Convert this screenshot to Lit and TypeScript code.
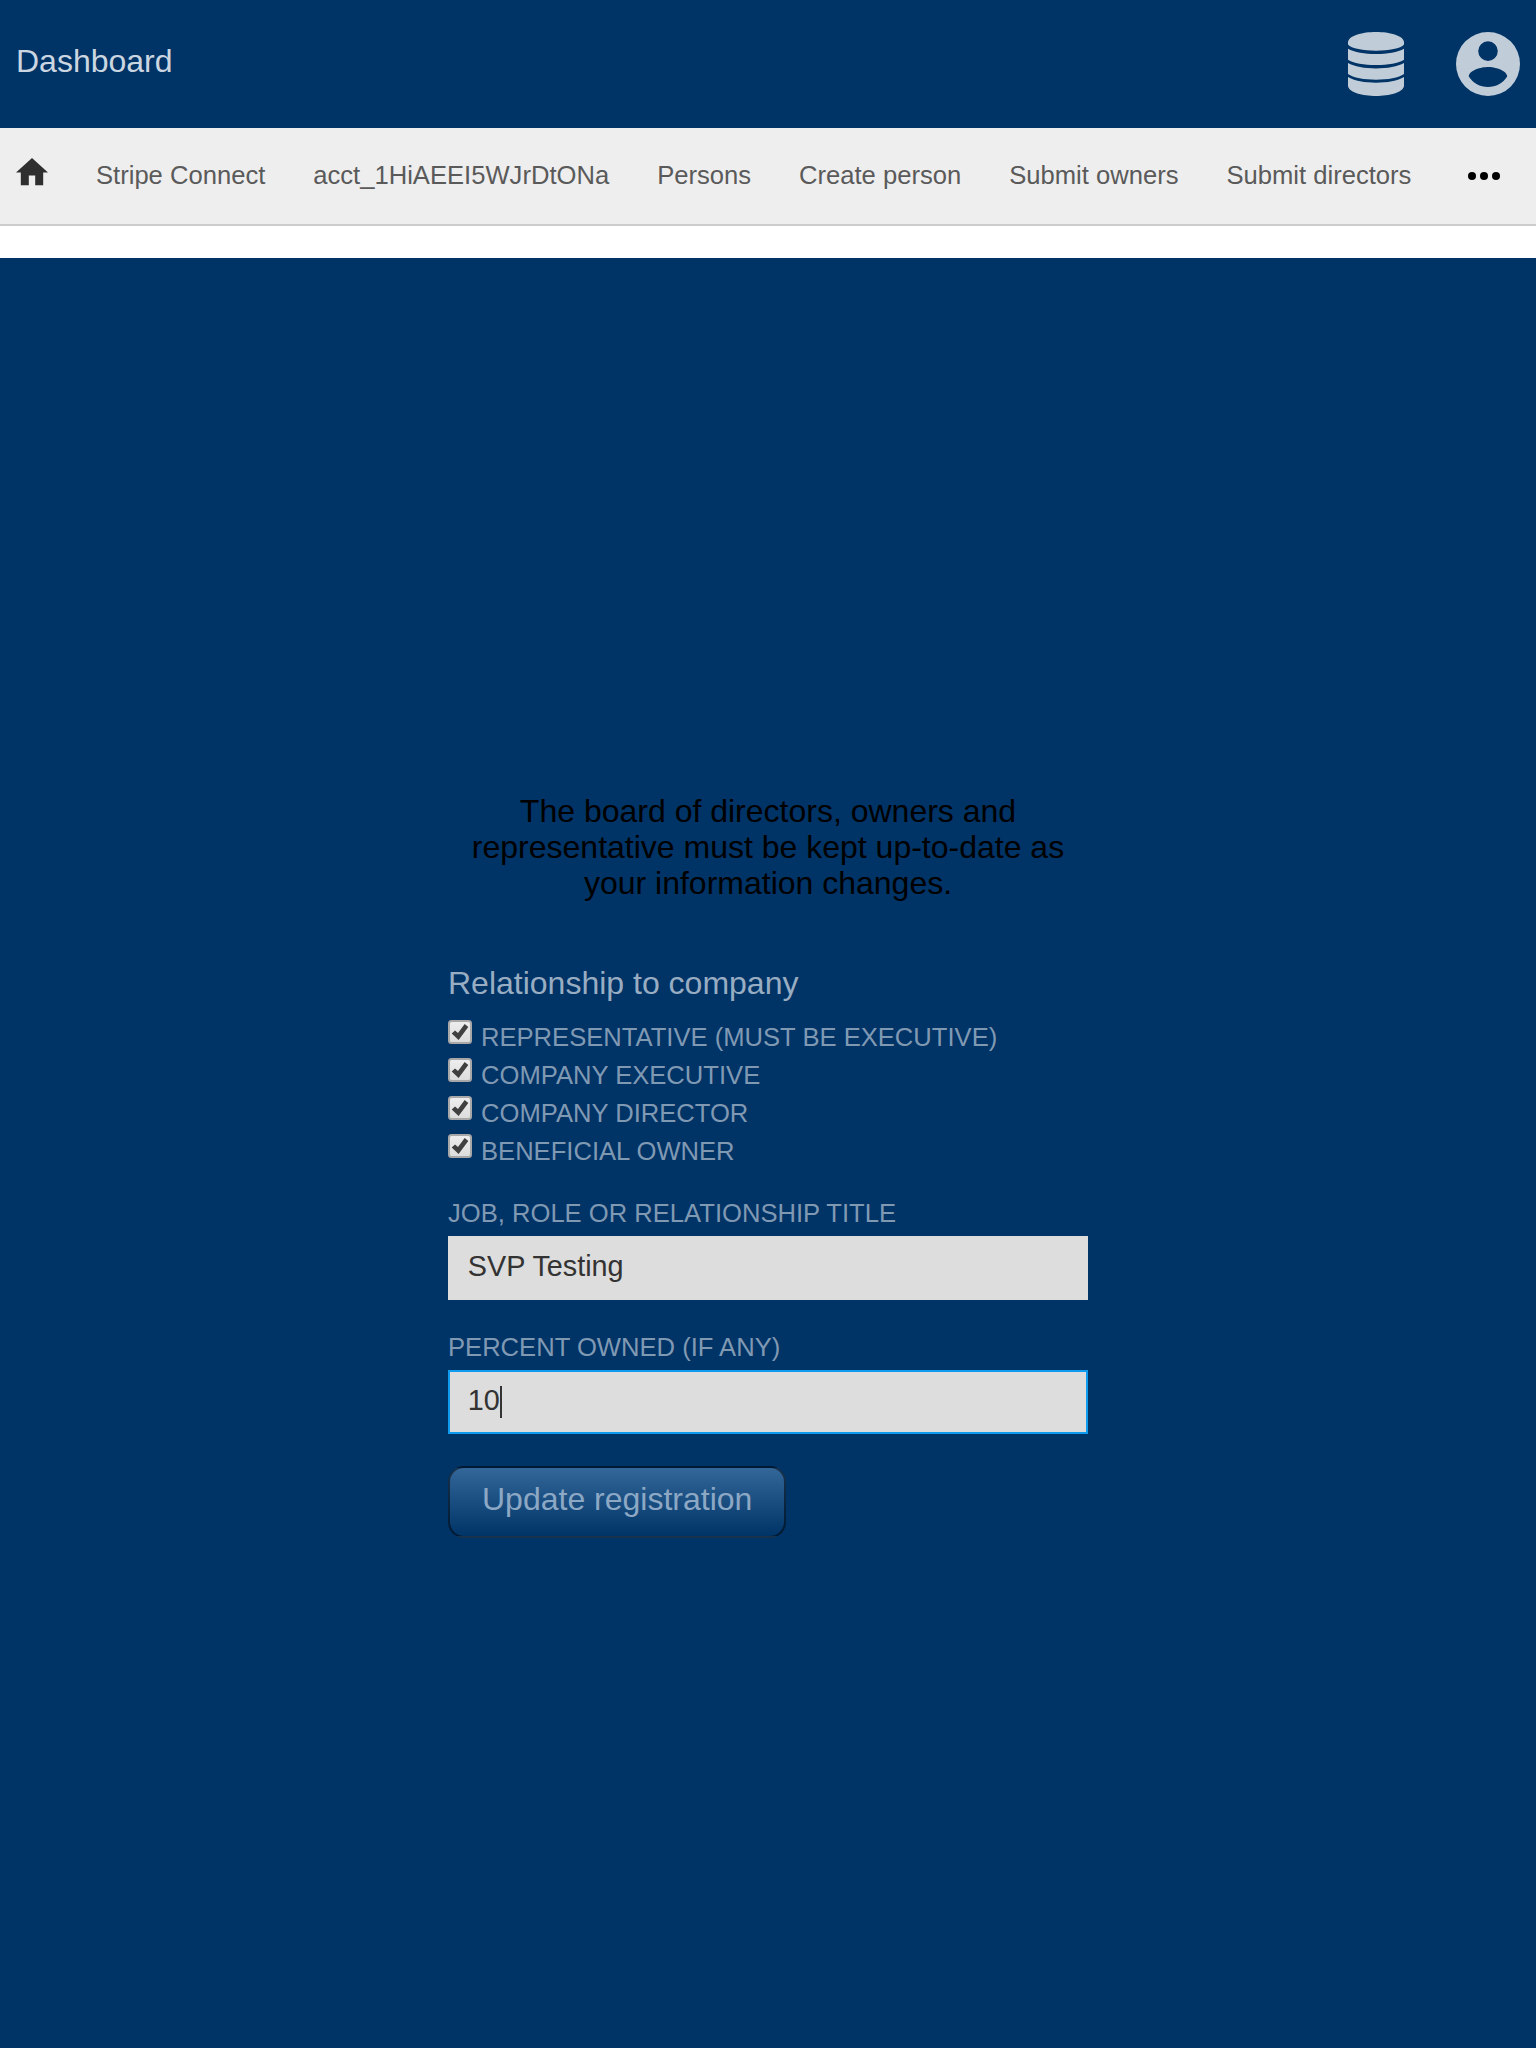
import { LitElement, html, css } from "lit";
import { customElement } from "lit/decorators.js";

@customElement("app-root")
export class AppRoot extends LitElement {
  static styles = css`
    :host { display: flex; flex-direction: column; height: 2048px; background: #003366; font-family: "Liberation Sans", Arial, sans-serif; font-size: 32px; line-height: 36px; }
    * { box-sizing: border-box; }
    .header { display: flex; height: 128px; padding: 0 16px; align-items: center; justify-content: space-between; }
    .brand { color: #ccd6e0; padding-bottom: 6px; }
    .icons { display: flex; gap: 52px; color: #c0ccd8; }
    .icons svg { display: block; fill: currentColor; }
    .nav { display: flex; height: 98px; padding-left: 16px; background: #eeeeee; border-bottom: 2px solid #cccccc; font-size: 25.6px; line-height: 94px; color: #5a5a5a; }
    .home { width: 32px; height: 27.2px; margin: 30.4px 24px 0 0; fill: #2f2f2f; }
    .link { padding: 0 24px; white-space: nowrap; }
    .dots { margin: 44px 0 0 33px; width: 32px; height: 8px; fill: #000000; }
    .gap { height: 32px; background: #ffffff; }
    .main { width: 640px; margin: 0 auto; padding-top: 535px; }
    .note { margin: 0; padding: 0 16px; text-align: center; color: #000000; }
    .title { margin: 64px 0 0; color: #99adc2; }
    .checks { margin: 16px 0 -3px; }
    .check { display: flex; height: 38px; gap: 9px; }
    .box { width: 24px; height: 24px; margin-top: 3px; flex: none; }
    .label { font-size: 25.6px; line-height: 30px; color: #8099b3; text-transform: uppercase; }
    .check .label { padding-top: 5px; }
    .field { padding-top: 32px; }
    .input { height: 64px; margin-top: 8px; border: 2px solid #dddddd; background: #dddddd; color: #333333; font-size: 28.8px; line-height: 28px; padding: 14px 17.8px; display: flex; }
    .focused { border-color: #109cee; }
    .caret { width: 2px; height: 32px; background: #333333; }
    .button { display: block; margin-top: 32px; height: 72px; padding: 0 32px 6px; font: inherit; color: #8ca8c4; border: 2px solid rgba(0, 0, 0, 0.5); border-radius: 16px; background: linear-gradient(#336699, #003366); }
  `;

  private links = ["Stripe Connect", "acct_1HiAEEI5WJrDtONa", "Persons", "Create person", "Submit owners", "Submit directors"];
  private roles = ["Representative (must be executive)", "Company executive", "Company director", "Beneficial owner"];

  render() {
    return html`
      <header class="header">
        <span class="brand">Dashboard</span>
        <div class="icons">
          <svg width="56" height="64" viewBox="0 0 56 64">
            <path d="M0 10C2-3.300 54-3.300 56 10V12.500C50 20.700 6 20.700 0 12.500Z"/>
            <path d="M0 16.700C12 23.800 44 23.800 56 16.700V27.700C46 34.800 10 34.800 0 27.700Z"/>
            <path d="M0 31C12 38.200 44 38.200 56 31V42C46 49.600 10 49.600 0 42Z"/>
            <path d="M0 45C12 52.600 44 52.600 56 45V54C54 67.300 2 67.300 0 54Z"/>
          </svg>
          <svg width="64" height="64" viewBox="0 0 64 64">
            <path fill-rule="evenodd" d="M32 0a32 32 0 1 0 0 64a32 32 0 1 0 0-64ZM32 9.300a9.800 9.800 0 1 1 0 19.600a9.800 9.800 0 1 1 0-19.600ZM12.800 44.500C13 38 25.600 35 32 35S51 38 51.200 44.500C47 51 40 55 32 55S17 51 12.800 44.500Z"/>
          </svg>
        </div>
      </header>
      <nav class="nav">
        <svg class="home" viewBox="2 3 20 17"><path d="M10 20v-6h4v6h5v-8h3L12 3 2 12h3v8z"/></svg>
        ${this.links.map((l) => html`<span class="link">${l}</span>`)}
        <svg class="dots" viewBox="0 0 32 8"><circle cx="4" cy="4" r="4"/><circle cx="16" cy="4" r="4"/><circle cx="28" cy="4" r="4"/></svg>
      </nav>
      <div class="gap"></div>
      <main class="main">
        <p class="note">The board of directors, owners and representative must be kept up-to-date as your information changes.</p>
        <div class="title">Relationship to company</div>
        <div class="checks">
          ${this.roles.map((r) => html`<div class="check">
            <svg class="box" viewBox="0 0 24 24">
              <defs><linearGradient id="g" x1="0" y1="0" x2="0" y2="1"><stop offset="0" stop-color="#eeeeee"/><stop offset="1" stop-color="#dcdcdc"/></linearGradient></defs>
              <rect x="1" y="1" width="22" height="22" rx="2.500" fill="url(#g)" stroke="#a8a8a8" stroke-width="2"/>
              <path d="M3.700 13.500L7 10.600L10 13L16.700 4L20.300 7L10.600 20Z" fill="#404040"/>
            </svg>
            <span class="label">${r}</span>
          </div>`)}
        </div>
        <div class="field"><div class="label">Job, role or relationship title</div><div class="input">SVP Testing</div></div>
        <div class="field"><div class="label">Percent owned (if any)</div><div class="input focused">10<span class="caret"></span></div></div>
        <button class="button">Update registration</button>
      </main>
    `;
  }
}
